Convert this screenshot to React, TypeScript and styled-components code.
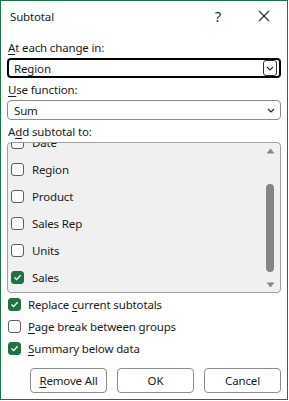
import styled, { createGlobalStyle } from "styled-components";

const GlobalStyle = createGlobalStyle`
  html, body {
    margin: 0;
    padding: 0;
    background: #ffffff;
  }
  body {
    font-family: "Noto Sans", "Liberation Sans", sans-serif;
    font-size: 11.5px;
    letter-spacing: -0.15px;
    color: #1a1a1a;
  }
`;

const Window = styled.div`
  box-sizing: border-box;
  width: 288px;
  height: 400px;
  border: 1px solid #1f7244;
  display: flex;
  flex-direction: column;
  background: #ffffff;
`;

const TitleBar = styled.div`
  height: 30px;
  flex: none;
  display: flex;
  align-items: center;
  padding-left: 9px;
`;

const Title = styled.span`
  flex: 1;
`;

const TitleButton = styled.span<{ $size?: number }>`
  width: 46px;
  height: 30px;
  display: flex;
  align-items: center;
  justify-content: center;
  color: #333;
  font-size: ${(p) => p.$size ?? 12}px;
`;

const Body = styled.div`
  padding: 9px 6px 0 6px;
  display: flex;
  flex-direction: column;
`;

const Label = styled.div`
  height: 16px;
  line-height: 16px;
  margin: 0 0 2px 1px;
`;

const Key = styled.span`
  text-decoration: underline;
  text-underline-offset: 2px;
`;

const Select = styled.div<{ $focused?: boolean }>`
  box-sizing: border-box;
  height: 20px;
  margin-bottom: 4px;
  border: ${(p) => (p.$focused ? "2px solid #000" : "1px solid #8d8d8d")};
  border-radius: 4px;
  display: flex;
  align-items: center;
  padding-left: ${(p) => (p.$focused ? "5px" : "6px")};
  padding-right: 1px;
`;

const SelectText = styled.span`
  flex: 1;
`;

const DropButton = styled.span<{ $boxed?: boolean }>`
  box-sizing: border-box;
  width: 14px;
  height: 16px;
  display: flex;
  align-items: center;
  justify-content: center;
  border: ${(p) => (p.$boxed ? "1px solid #333" : "1px solid transparent")};
  border-radius: 3px;
  margin-right: 1px;
`;

const ListBox = styled.div`
  box-sizing: border-box;
  height: 151px;
  background: #f0f0f0;
  border: 1px solid #a0a0a0;
  border-radius: 4px;
  display: flex;
  overflow: hidden;
`;

const List = styled.div`
  flex: 1;
  margin-top: -14px;
  display: flex;
  flex-direction: column;
`;

const Row = styled.div`
  height: 27px;
  flex: none;
  display: flex;
  align-items: center;
  gap: 8px;
  padding-left: 3px;
`;

const Box = styled.span<{ $checked?: boolean }>`
  box-sizing: border-box;
  width: 13px;
  height: 13px;
  border-radius: 3px;
  border: 1px solid ${(p) => (p.$checked ? "#1f7244" : "#5d5d5d")};
  background: ${(p) => (p.$checked ? "#1f7244" : "#fff")};
  display: flex;
  align-items: center;
  justify-content: center;
  flex: none;
`;

const ScrollBar = styled.div`
  width: 14px;
  margin-right: 3px;
  display: flex;
  flex-direction: column;
  align-items: center;
  padding: 5px 0 4px;
`;

const Thumb = styled.div`
  width: 8px;
  flex: none;
  height: 88px;
  margin: 30px 0 auto;
  border-radius: 4px;
  background: #858585;
`;

const Option = styled.div`
  height: 22px;
  flex: none;
  display: flex;
  align-items: center;
  gap: 7px;
  margin-left: 1px;
`;

const Buttons = styled.div`
  display: flex;
  justify-content: flex-end;
  gap: 10px;
  margin-top: 9px;
`;

const Button = styled.button`
  box-sizing: border-box;
  width: 77px;
  height: 25px;
  background: #fff;
  border: 1px solid #8d8d8d;
  border-radius: 4px;
  font: inherit;
  letter-spacing: inherit;
  color: #1a1a1a;
  padding: 0;
`;

const Check = () => (
  <svg width="9" height="9" viewBox="0 0 9 9">
    <path d="M1.5 4.6 L3.6 6.6 L7.6 2.2" fill="none" stroke="#fff" strokeWidth="1.4" />
  </svg>
);

const Chevron = () => (
  <svg width="8" height="5" viewBox="0 0 8 5">
    <path d="M1 1 L4 4 L7 1" fill="none" stroke="#222" strokeWidth="1.1" />
  </svg>
);

const Arrow = ({ up }: { up?: boolean }) => (
  <svg width="9" height="6" viewBox="0 0 9 6">
    <path d={up ? "M0.5 5.5 L4.5 0.5 L8.5 5.5 Z" : "M0.5 0.5 L4.5 5.5 L8.5 0.5 Z"} fill="#858585" />
  </svg>
);

const fields = [
  { name: "Date", checked: false },
  { name: "Region", checked: false },
  { name: "Product", checked: false },
  { name: "Sales Rep", checked: false },
  { name: "Units", checked: false },
  { name: "Sales", checked: true },
];

export default function App() {
  return (
    <>
      <GlobalStyle />
      <Window>
        <TitleBar>
          <Title>Subtotal</Title>
          <TitleButton $size={15}>?</TitleButton>
          <TitleButton>
            <svg width="12" height="12" viewBox="0 0 12 12">
              <path d="M1 1 L11 11 M11 1 L1 11" stroke="#333" strokeWidth="1.1" />
            </svg>
          </TitleButton>
        </TitleBar>
        <Body>
          <Label>
            <Key>A</Key>t each change in:
          </Label>
          <Select $focused>
            <SelectText>Region</SelectText>
            <DropButton $boxed>
              <Chevron />
            </DropButton>
          </Select>
          <Label>
            <Key>U</Key>se function:
          </Label>
          <Select>
            <SelectText>Sum</SelectText>
            <DropButton>
              <Chevron />
            </DropButton>
          </Select>
          <Label>
            A<Key>d</Key>d subtotal to:
          </Label>
          <ListBox>
            <List>
              {fields.map((f) => (
                <Row key={f.name}>
                  <Box $checked={f.checked}>{f.checked && <Check />}</Box>
                  {f.name}
                </Row>
              ))}
            </List>
            <ScrollBar>
              <Arrow up />
              <Thumb />
              <Arrow />
            </ScrollBar>
          </ListBox>
          <Option>
            <Box $checked>
              <Check />
            </Box>
            <span>
              Replace <Key>c</Key>urrent subtotals
            </span>
          </Option>
          <Option>
            <Box />
            <span>
              <Key>P</Key>age break between groups
            </span>
          </Option>
          <Option>
            <Box $checked>
              <Check />
            </Box>
            <span>
              <Key>S</Key>ummary below data
            </span>
          </Option>
          <Buttons>
            <Button>
              <Key>R</Key>emove All
            </Button>
            <Button>OK</Button>
            <Button>Cancel</Button>
          </Buttons>
        </Body>
      </Window>
    </>
  );
}
